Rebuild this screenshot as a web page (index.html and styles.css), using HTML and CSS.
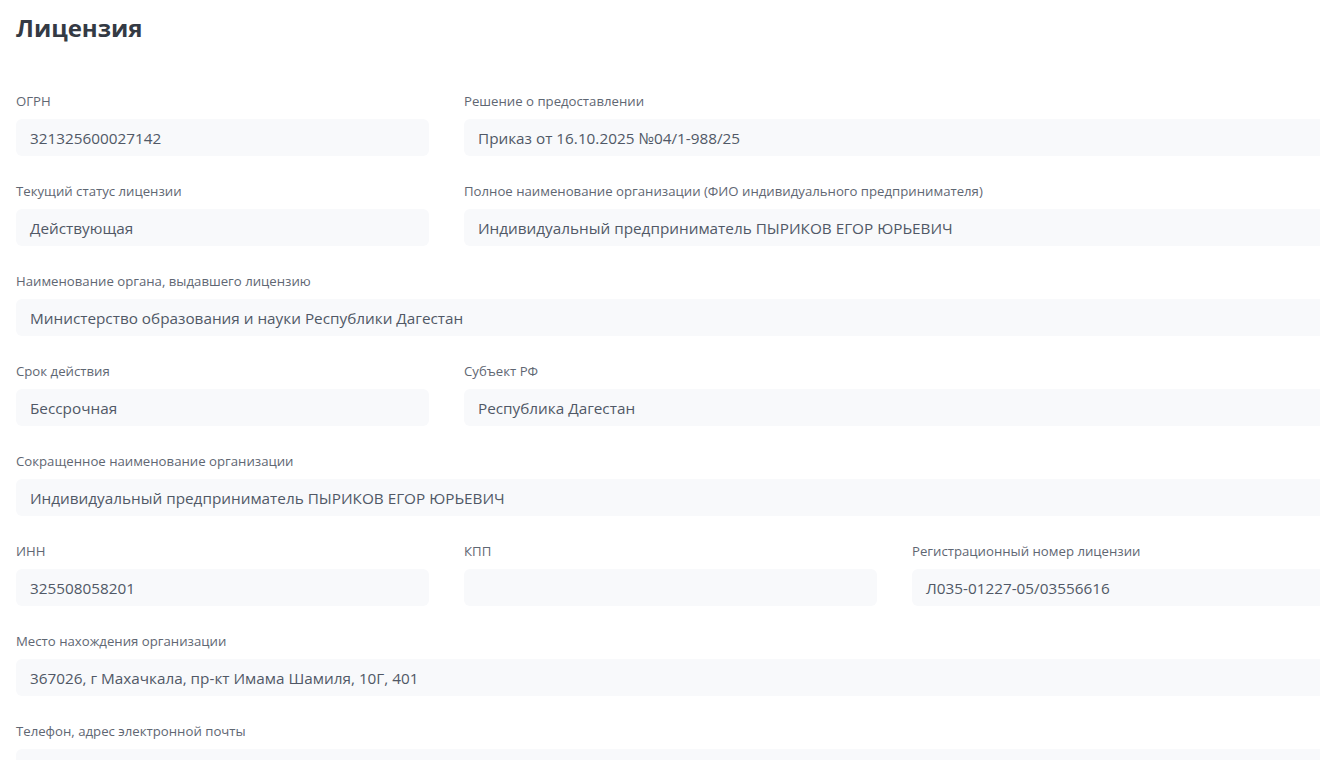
FILE: index.html
```html
<!DOCTYPE html>
<html lang="ru">
<head>
    <meta charset="UTF-8">
    <meta name="viewport" content="width=device-width, initial-scale=1.0">
    <title>Лицензия</title>
    <link rel="stylesheet" href="styles.css">
</head>
<body>

    <div class="license-page">
        <h2 class="page-title">Лицензия</h2>

        <div class="license-grid">
            <div class="field">
                <label class="field-label">ОГРН</label>
                <div class="field-value">321325600027142</div>
            </div>
            <div class="field span-rest">
                <label class="field-label">Решение о предоставлении</label>
                <div class="field-value">Приказ от 16.10.2025 №04/1-988/25</div>
            </div>

            <div class="field">
                <label class="field-label">Текущий статус лицензии</label>
                <div class="field-value">Действующая</div>
            </div>
            <div class="field span-rest">
                <label class="field-label">Полное наименование организации (ФИО индивидуального предпринимателя)</label>
                <div class="field-value">Индивидуальный предприниматель ПЫРИКОВ ЕГОР ЮРЬЕВИЧ</div>
            </div>

            <div class="field span-full">
                <label class="field-label">Наименование органа, выдавшего лицензию</label>
                <div class="field-value">Министерство образования и науки Республики Дагестан</div>
            </div>

            <div class="field">
                <label class="field-label">Срок действия</label>
                <div class="field-value">Бессрочная</div>
            </div>
            <div class="field span-rest">
                <label class="field-label">Субъект РФ</label>
                <div class="field-value">Республика Дагестан</div>
            </div>

            <div class="field span-full">
                <label class="field-label">Сокращенное наименование организации</label>
                <div class="field-value">Индивидуальный предприниматель ПЫРИКОВ ЕГОР ЮРЬЕВИЧ</div>
            </div>

            <div class="field">
                <label class="field-label">ИНН</label>
                <div class="field-value">325508058201</div>
            </div>
            <div class="field">
                <label class="field-label">КПП</label>
                <div class="field-value"></div>
            </div>
            <div class="field">
                <label class="field-label">Регистрационный номер лицензии</label>
                <div class="field-value">Л035-01227-05/03556616</div>
            </div>

            <div class="field span-full">
                <label class="field-label">Место нахождения организации</label>
                <div class="field-value">367026, г Махачкала, пр-кт Имама Шамиля, 10Г, 401</div>
            </div>

            <div class="field span-full">
                <label class="field-label">Телефон, адрес электронной почты</label>
                <div class="field-value"></div>
            </div>
        </div>
    </div>

</body>
</html>
```

FILE: styles.css
```css
body {
    margin: 0;
    background: white;
    font-family: "Open Sans", "Noto Sans", sans-serif;
    overflow: hidden;
}

.license-page {
    padding: 12px 0 0 16px;
}

.page-title {
    margin: 0;
    font-size: 24px;
    line-height: 32px;
    font-weight: 700;
    color: #343a44;
}

.license-grid {
    display: grid;
    grid-template-columns: repeat(3, 413px);
    column-gap: 35px;
    row-gap: 26px;
    margin-top: 48px;
}

.span-rest {
    grid-column: 2 / -1;
}

.span-full {
    grid-column: 1 / -1;
}

.field {
    display: flex;
    flex-direction: column;
    gap: 9px;
}

.field-label {
    font-size: 13.2px;
    line-height: 18px;
    color: #5f6773;
}

.field-value {
    box-sizing: border-box;
    height: 37px;
    padding: 1px 14px 0;
    background: #f8f9fb;
    border-radius: 6px;
    font-size: 15.3px;
    line-height: 36px;
    color: #505866;
    white-space: nowrap;
}
```
